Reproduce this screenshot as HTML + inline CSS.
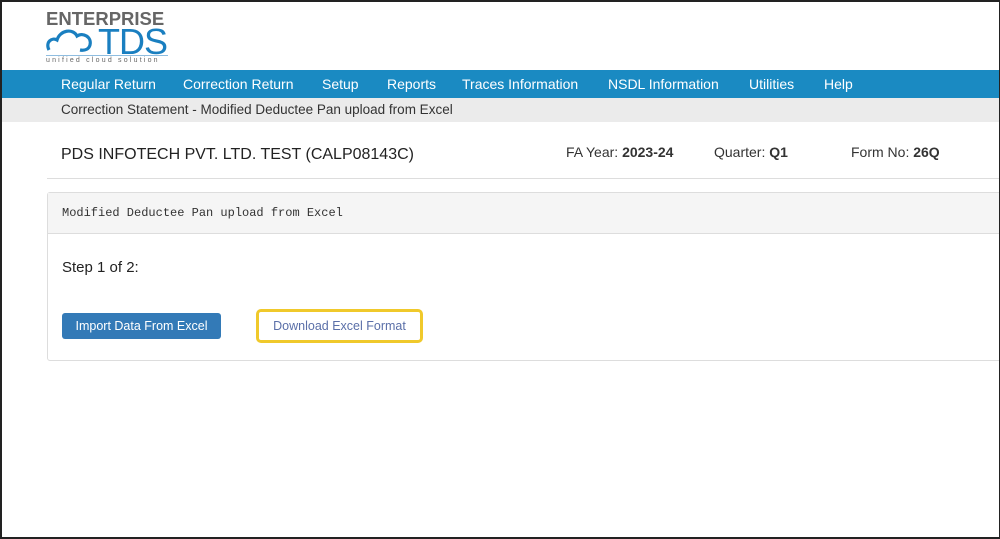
<!DOCTYPE html><html><head><style>
body{margin:0;width:1000px;height:539px;overflow:hidden;background:#fff;font-family:"Liberation Sans",sans-serif;position:relative}
.frame{position:absolute;inset:0;border:2px solid #222;pointer-events:none;z-index:5;box-sizing:border-box;width:1000px;height:539px;border-right:1px solid #222}
.a{position:absolute;white-space:nowrap}
.nav{position:absolute;top:70px;left:0;width:1000px;height:28px;background:#1a8ac2}
.nav span{position:absolute;top:6px;color:#fff;font-size:14px}
.bc{position:absolute;top:98px;left:0;width:1000px;height:24px;background:#ebebeb;color:#333;font-size:13.5px}
</style></head><body>
<div class="frame"></div>
<div class="a" style="left:46px;top:8px;font-size:18.5px;font-weight:bold;color:#666">ENTERPRISE</div>
<svg class="a" style="left:45px;top:27px" width="52" height="26" viewBox="0 0 52 26"><path d="M4 23 C0 15 7 10 12 13 C15 3 28 1 32 9 C38 5 47 10 45 18 C44 22 40 24 35 23" fill="none" stroke="#1a7fc0" stroke-width="3.2"/></svg>
<div class="a" style="left:98px;top:21px;font-size:36px;color:#1a7fc0;letter-spacing:-1px">TDS</div>
<div class="a" style="left:46px;top:55px;width:122px;height:1px;background:#8fbde0"></div>
<div class="a" style="left:46px;top:57px;font-size:7px;color:#666;letter-spacing:2.2px">unified cloud solution</div>
<div class="nav">
<span style="left:61px">Regular Return</span><span style="left:183px">Correction Return</span><span style="left:322px">Setup</span><span style="left:387px">Reports</span><span style="left:462px">Traces Information</span><span style="left:608px">NSDL Information</span><span style="left:749px">Utilities</span><span style="left:824px">Help</span></div>
<div class="bc"><span class="a" style="left:61px;top:4px">Correction Statement - Modified Deductee Pan upload from Excel</span></div>
<div class="a" style="left:61px;top:146px;font-size:16px;color:#222">PDS INFOTECH PVT. LTD. TEST (CALP08143C)</div>
<div class="a" style="left:566px;top:144px;font-size:14px;color:#333">FA Year: <b>2023-24</b></div>
<div class="a" style="left:714px;top:144px;font-size:14px;color:#333">Quarter: <b>Q1</b></div>
<div class="a" style="left:851px;top:144px;font-size:14px;color:#333">Form No: <b>26Q</b></div>
<div class="a" style="left:47px;top:178px;width:953px;height:1px;background:#ddd"></div>
<div class="a" style="left:47px;top:192px;width:960px;height:169px;border:1px solid #ddd;border-radius:3px;box-sizing:border-box">
<div style="height:40px;background:#f5f5f5;border-bottom:1px solid #ddd;font-family:'Liberation Mono',monospace;font-size:12px;color:#333;line-height:40px;padding-left:14px">Modified Deductee Pan upload from Excel</div>
<div class="a" style="left:14px;top:66px;font-size:15px;color:#222">Step 1 of 2:</div>
<div class="a" style="left:14px;top:120px;width:159px;height:26px;background:#337ab7;border-radius:3px;color:#fff;font-size:12.5px;line-height:26px;text-align:center">Import Data From Excel</div>
<div class="a" style="left:208px;top:116px;width:167px;height:34px;border:3px solid #f0c92b;border-radius:5px;box-sizing:border-box;color:#5a6fa8;font-size:12.5px;line-height:28px;text-align:center">Download Excel Format</div>
</div>
</body></html>
